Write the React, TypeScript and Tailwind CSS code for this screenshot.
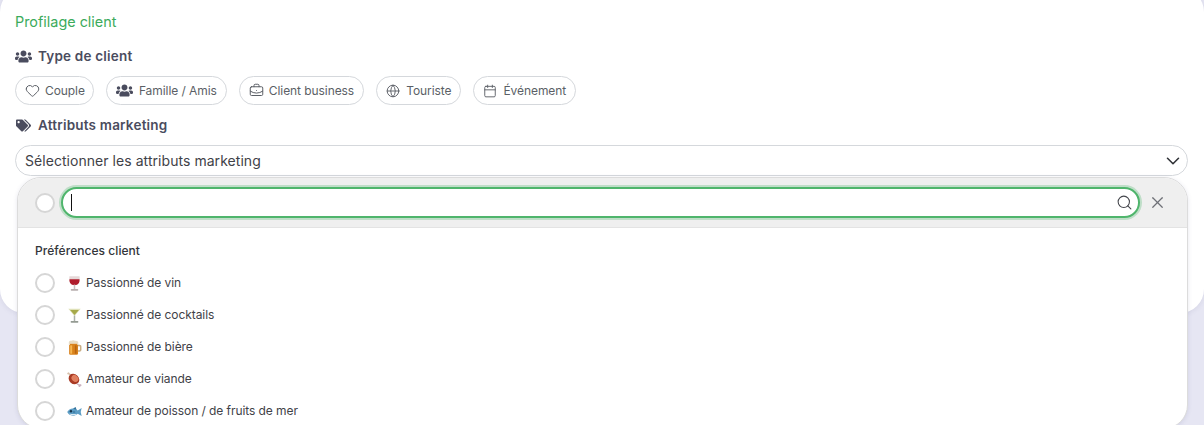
import { Heart, BriefcaseBusiness, Globe, Calendar, ChevronDown, Search, X } from "lucide-react";
import { FaUsers, FaTags } from "react-icons/fa";
import type { ReactNode } from "react";

const Wine = () => (
  <svg viewBox="0 0 14 14" className="h-[15px] w-[15px]">
    <path d="M2.300.3h9.400c.7 5-.8 8-4.700 8.300C3.100 8.300 1.600 5.300 2.300.3z" fill="#e6d8d8" />
    <path d="M2.300 3h9.400c.2 3.700-1.300 5.300-4.700 5.500C3.600 8.300 2.100 6.700 2.300 3z" fill="#b01c2c" />
    <rect x="6.300" y="8" width="1.400" height="4.300" fill="#c9c0c0" />
    <rect x="3.500" y="12.200" width="7" height="1.500" rx=".7" fill="#b8aeae" />
  </svg>
);
const Cocktail = () => (
  <svg viewBox="0 0 14 14" className="h-[15px] w-[15px]">
    <path d="M1.200.6h11.600L7 7.400z" fill="#dfe1b8" />
    <path d="M2.900 1.900h8.200L7 6.600z" fill="#a6a94a" />
    <rect x="6.300" y="7" width="1.400" height="5.200" fill="#aab0a9" />
    <rect x="3.400" y="12.100" width="7.200" height="1.600" rx=".7" fill="#949b93" />
  </svg>
);
const Beer = () => (
  <svg viewBox="0 0 14 14" className="h-[15px] w-[15px]">
    <path d="M9.500 4.500h2.300c1 0 1.700.7 1.700 1.700v3c0 1-.7 1.700-1.700 1.700H9.500V9.500h2c.4 0 .6-.2.600-.6V6.500c0-.4-.2-.6-.6-.6h-2z" fill="#c9ae85" />
    <rect x="2" y="3" width="8.300" height="10.800" rx="1.200" fill="#d9821c" />
    <rect x="3" y="5" width="1.800" height="7.800" fill="#f5b650" />
    <rect x="7.400" y="5" width="1.500" height="7.800" fill="#b9650f" />
    <path d="M1.700 2.200C1.700 1 3 .3 4 .7c.8-.7 2.800-.7 3.400 0 1.400-.4 3.100.3 3.100 1.700v2H9.300v-.8H2.800v1H1.700z" fill="#e8dcc4" />
  </svg>
);
const Meat = () => (
  <svg viewBox="0 0 14 14" className="h-[15px] w-[15px]">
    <path d="M.2.900L1.800.2 2.500 1.300l1.600.9-1.300 1.500-1.200-1.300L.4 2.200z" fill="#d6bfa9" />
    <ellipse cx="6.500" cy="6.600" rx="5.300" ry="4.500" transform="rotate(42 6.500 6.600)" fill="#a93a24" />
    <ellipse cx="7.400" cy="6" rx="3.500" ry="2.800" transform="rotate(42 7.400 6)" fill="#e07f5f" />
    <path d="M9.800 10.200l1.300 1.200 2 .1.600 1.200-1.100.3-.3 1h-1.300l-.3-1.300-1.800-1.300z" fill="#c9afbd" />
  </svg>
);
const Fish = () => (
  <svg viewBox="0 0 14 14" className="h-[15px] w-[15px]">
    <path d="M.2 7.500C1.800 4.100 6.300 2.700 10 6l3.700-2.200-.9 3.700.9 3.700L10 9c-3.700 3.300-8.200 1.900-9.800-1.500z" fill="#5b9cc4" />
    <path d="M2 9c2.400 2.100 5.300 2 7.500.3-2.600.3-5 .1-7.500-.3z" fill="#dbe9f1" />
    <circle cx="3.700" cy="6.800" r="1.100" fill="#16344a" />
    <path d="M5.600 4.300l2.500-1.500.8 2.800z" fill="#33749e" />
    <path d="M6 6.500l2 1-2 1z" fill="#2f6a91" />
  </svg>
);

const Pill = ({ icon, label, className }: { icon: ReactNode; label: string; className: string }) => (
  <div className={`flex h-[29px] items-center rounded-full border border-[#d5d8dc] bg-white pl-[9px] text-[12px] tracking-[-0.07px] text-[#5b5f66] ${className}`}>
    {icon}
    <span>{label}</span>
  </div>
);

const Radio = () => <div className="h-5 w-5 shrink-0 rounded-full border-2 border-[#d6d6d6] bg-white" />;

const Option = ({ icon, label }: { icon: ReactNode; label: string }) => (
  <div className="flex h-8 items-center">
    <Radio />
    <div className="ml-[12px] flex w-[19px] shrink-0 items-center">{icon}</div>
    <span className="text-[12px] tracking-[-0.07px] text-[#3f4248]">{label}</span>
  </div>
);

export default function App() {
  return (
    <div className="h-[425px] w-[1204px] overflow-hidden bg-[#e6e6f3] font-['Inter',sans-serif]">
      <div className="-mt-[12px] h-[325px] rounded-[24px] bg-white pl-[15px] pr-[16px] pt-[24px] shadow-[0_1px_5px_rgba(90,90,140,0.12)]">
        <h2 className="text-[14.4px] leading-[20px] text-[#3cab5c]">Profilage client</h2>
        <div className="mt-[14px] flex h-[20px] items-center gap-[6px] text-[13.5px] font-semibold tracking-[0.2px] text-[#4a4c5e]">
          <FaUsers className="h-[17px] w-[17px]" />
          <span>Type de client</span>
        </div>
        <div className="mt-[10px] flex gap-3">
          <Pill className="gap-[5px] pr-[8px]" icon={<Heart className="h-[15px] w-[15px]" strokeWidth={1.6} />} label="Couple" />
          <Pill className="gap-[6px] pr-[9px]" icon={<FaUsers className="h-[17px] w-[17px] text-[#4a4c5e]" />} label="Famille / Amis" />
          <Pill className="gap-[5px] pr-[9px]" icon={<BriefcaseBusiness className="h-[15px] w-[15px]" strokeWidth={1.6} />} label="Client business" />
          <Pill className="gap-[6px] pr-[9px]" icon={<Globe className="h-[14px] w-[14px]" strokeWidth={1.6} />} label="Touriste" />
          <Pill className="gap-[6px] pr-[9px]" icon={<Calendar className="h-[14px] w-[14px]" strokeWidth={1.6} />} label="Événement" />
        </div>
        <div className="mt-[10px] flex h-[20px] items-center gap-[7px] text-[13.5px] font-semibold tracking-[0.2px] text-[#4a4c5e]">
          <FaTags className="ml-[1px] h-[15px] w-[15px]" />
          <span>Attributs marketing</span>
        </div>
        <div className="relative mt-[10px]">
          <div className="flex h-[31px] items-center justify-between rounded-full border border-[#d5d8dc] bg-white pl-[9px] pr-[3px] text-[14px] tracking-[0.05px] text-[#3f4248]">
            <span>Sélectionner les attributs marketing</span>
            <ChevronDown className="h-[22px] w-[22px] text-[#2f3136]" strokeWidth={1.7} />
          </div>
          <div className="absolute left-[2px] right-0 top-[32px] z-10 h-[252px] overflow-hidden rounded-[24px] border border-[#dcdcdc] bg-white shadow-[0_1px_4px_rgba(90,90,140,0.15)]">
            <div className="flex h-[50px] items-center border-b border-[#e3e3e3] bg-[#efefef] pl-[17px] pr-[20px]">
              <Radio />
              <div className="ml-[6px] flex h-[31px] flex-1 items-center justify-between rounded-full border-2 border-[#4fb56c] bg-white pl-[8px] pr-[5px] shadow-[0_0_0_2px_rgba(79,181,108,0.3)]">
                <div className="h-[17px] w-px bg-[#111]" />
                <Search className="h-[17px] w-[17px] text-[#44464c]" strokeWidth={1.5} />
              </div>
              <X className="ml-[8px] h-[19px] w-[19px] text-[#6e7076]" strokeWidth={1.5} />
            </div>
            <div className="pl-[17px] pt-[15px]">
              <div className="mb-[8px] h-[16px] text-[12px] font-medium leading-[16px] tracking-[0.05px] text-[#33353a]">Préférences client</div>
              <Option icon={<Wine />} label="Passionné de vin" />
              <Option icon={<Cocktail />} label="Passionné de cocktails" />
              <Option icon={<Beer />} label="Passionné de bière" />
              <Option icon={<Meat />} label="Amateur de viande" />
              <Option icon={<Fish />} label="Amateur de poisson / de fruits de mer" />
            </div>
          </div>
        </div>
      </div>
    </div>
  );
}
